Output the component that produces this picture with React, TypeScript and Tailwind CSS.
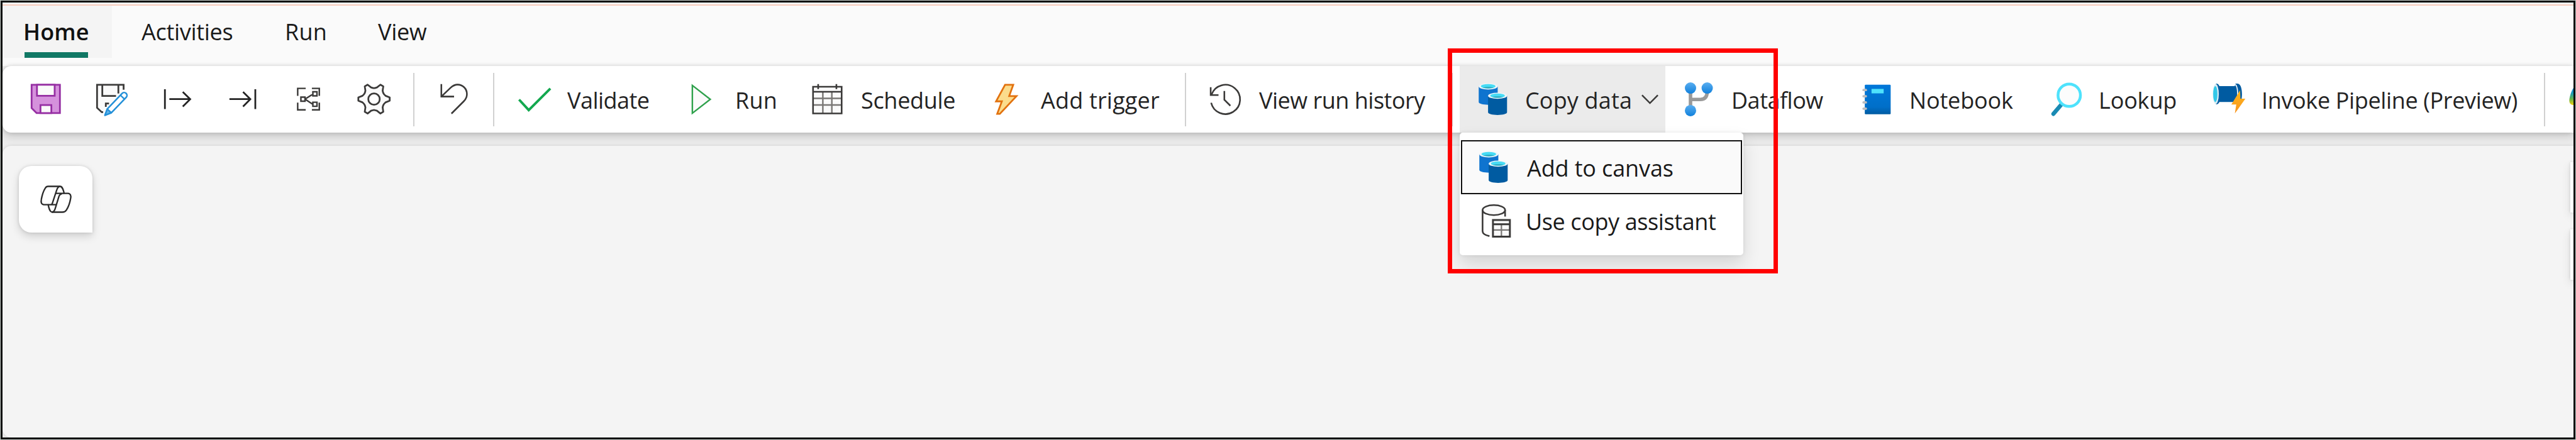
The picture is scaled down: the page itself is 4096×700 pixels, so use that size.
import type { ReactNode } from "react";

const INK = "#3b3a39";

function Icon({ children }: { children: ReactNode }) {
  return (
    <svg viewBox="0 0 56 56" className="h-[52px] w-[52px] shrink-0 overflow-visible" fill="none">
      {children}
    </svg>
  );
}

const SaveIcon = () => (
  <Icon>
    <path d="M3.5 3H52V51.5H12L3.5 43Z" fill="#d591dc" stroke="#962fa3" strokeWidth="3" />
    <path d="M12.7 3V22H43V3Z" fill="#fafafa" stroke="#962fa3" strokeWidth="3" />
    <path d="M18.7 51.5V37.8H37.3V51.5Z" fill="#fafafa" stroke="#962fa3" strokeWidth="3" />
  </Icon>
);

const SaveAsIcon = () => (
  <Icon>
    <path d="M2.5 3H48V18L18 46L12 50L2.5 42.5Z" fill="#fafafa" />
    <path
      d="M48 11.5V3H2.5V42.5L10.5 50H13M11.5 3V22.3H35M39 3V18M17.5 41V35.2H23"
      stroke={INK}
      strokeWidth="3"
    />
    <path
      d="M16 55.3L20 44.5L45.4 18A4.7 4.7 0 0 1 52.4 24.6L27 51Z"
      fill="#fff"
      stroke="#2390d8"
      strokeWidth="2.7"
      strokeLinejoin="round"
    />
    <path d="M16 55.3L20 44.5L27 51Z" fill="#5fb2ea" stroke="#2390d8" strokeWidth="2.4" strokeLinejoin="round" />
    <path d="M42.6 21L49.4 27.6" stroke="#2390d8" strokeWidth="2.6" />
  </Icon>
);

const InputIcon = () => (
  <Icon>
    <path d="M6.7 10.7V44.7M14.3 27.7H50M37.3 15.3L50 27.7L37.3 40.3" stroke="#242424" strokeWidth="3" />
  </Icon>
);

const OutputIcon = () => (
  <Icon>
    <path d="M49.5 10.7V44.7M5.2 27.7H41M28.5 15.3L41 27.7L28.5 40.3" stroke="#242424" strokeWidth="3" />
  </Icon>
);

const LineageIcon = () => (
  <Icon>
    <path
      d="M22.7 9.3H9V22M33.3 9.3H46V22M22.7 46H9V33.7M33.3 46H46V33.7"
      stroke={INK}
      strokeWidth="2.6"
    />
    <path
      d="M14.5 24.2H21.5V31.2H14.5ZM35 15H42V22H35ZM35 33H42V40H35ZM21.5 27.7L35 19M21.5 27.7L35 36.5"
      stroke={INK}
      strokeWidth="2.6"
    />
  </Icon>
);

function gearPoints() {
  const points: string[] = [];
  const add = (deg: number, r: number) => {
    const a = (deg * Math.PI) / 180;
    points.push(`${(27.7 + r * Math.cos(a)).toFixed(2)},${(27.6 + r * Math.sin(a)).toFixed(2)}`);
  };
  for (let k = 0; k < 6; k++) {
    const c = k * 60;
    add(c - 16, 20.5);
    add(c - 6, 27);
    add(c + 6, 27);
    add(c + 16, 20.5);
    add(c + 26, 19);
    add(c + 34, 19);
  }
  return points.join(" ");
}

const GearIcon = () => (
  <Icon>
    <polygon points={gearPoints()} fill="#fafafa" stroke={INK} strokeWidth="3" strokeLinejoin="round" />
    <circle cx="27.7" cy="27.6" r="9.8" fill="#fff" stroke={INK} strokeWidth="3" />
  </Icon>
);

const UndoIcon = () => (
  <Icon>
    <path
      d="M6.2 1.8V23.3H28M6.2 23.3L22 8.2C26 4.5 29.5 2.8 34 2.8A16 16 0 0 1 50 19C50 24 48 28 44.5 31.5L23.5 52.5"
      stroke={INK}
      strokeWidth="2.8"
    />
  </Icon>
);

const CheckIcon = () => (
  <Icon>
    <path d="M1.5 28.5L18 46.5L55 9.5" stroke="#13a84f" strokeWidth="4.2" />
  </Icon>
);

const PlayIcon = () => (
  <Icon>
    <path d="M12.8 4.2L43.5 28L12.8 51.8Z" fill="#fafafa" stroke="#2fa14c" strokeWidth="2.6" />
  </Icon>
);

const CalendarIcon = () => (
  <Icon>
    <path d="M3 6.5H52V52.3H3Z" fill="#fafafa" />
    <path d="M3 26.3H52M3 37.7H52M19.8 15V52M35.2 15V52" stroke="#797775" strokeWidth="2.6" />
    <path d="M3 6.5H52V52.3H3ZM3 15H52M11.8 1.8V10.4M43 1.8V10.4" stroke={INK} strokeWidth="2.8" />
  </Icon>
);

const BoltIcon = () => (
  <Icon>
    <path
      d="M26 3H40L33 22.5H45.5L17 53H12.5L20.5 31.5H10.5Z"
      fill="#fbdc8c"
      stroke="#e2720f"
      strokeWidth="3"
    />
  </Icon>
);

const HistoryIcon = () => (
  <Icon>
    <path
      d="M4.1 34A25.1 25.1 0 1 0 5 19.5M3.3 7.3V20.7H16.7M26.7 13.7V28.7L37 39"
      stroke={INK}
      strokeWidth="2.8"
    />
  </Icon>
);

const CopyDataIcon = () => (
  <Icon>
    <path d="M3.5 6V32.8C3.5 35.3 10.8 37.3 19.7 37.3S36 35.3 36 32.8V6Z" fill="#0f74cf" />
    <ellipse cx="19.7" cy="6" rx="16.2" ry="5.2" fill="#eef5f8" />
    <ellipse cx="19.7" cy="5.7" rx="12.6" ry="3.7" fill="#46dcf5" />
    <path d="M10.5 8.2C15 6.4 24.4 6.4 29 8.2C24.4 9.8 15 9.8 10.5 8.2Z" fill="#2ea9be" />
    <path d="M19.5 22V50.4C19.5 52.9 26.8 54.9 35.7 54.9S52 52.9 52 50.4V22Z" fill="#005ba1" />
    <ellipse cx="35.7" cy="22" rx="16.2" ry="5.2" fill="#eef5f8" />
    <ellipse cx="35.7" cy="21.8" rx="12.6" ry="3.7" fill="#46dcf5" />
    <path d="M26.5 24.2C31 22.4 40.4 22.4 45 24.2C40.4 25.8 31 25.8 26.5 24.2Z" fill="#2ea9be" />
  </Icon>
);

const DataflowIcon = () => (
  <Icon>
    <defs>
      <linearGradient id="node" x1="0" y1="0" x2="0" y2="1">
        <stop offset="0" stopColor="#5aaef0" />
        <stop offset="1" stopColor="#1080dc" />
      </linearGradient>
    </defs>
    <path d="M14 12V44M14 28.3H31Q42.6 28.3 42.6 14" stroke="#9a9a9a" strokeWidth="6" />
    <circle cx="14" cy="8.7" r="9.7" fill="url(#node)" />
    <circle cx="42.6" cy="8.7" r="9.7" fill="url(#node)" />
    <circle cx="14" cy="47.3" r="9.7" fill="url(#node)" />
  </Icon>
);

const NotebookIcon = () => (
  <Icon>
    <defs>
      <linearGradient id="book" x1="0" y1="0" x2="0" y2="1">
        <stop offset="0" stopColor="#0078d9" />
        <stop offset="0.75" stopColor="#006fc9" />
        <stop offset="1" stopColor="#005ba1" />
      </linearGradient>
    </defs>
    <rect x="7.7" y="3" width="44.3" height="50.7" rx="1.5" fill="url(#book)" />
    <rect x="19.2" y="10.2" width="20.8" height="7.6" fill="#4ee2fc" />
    {[12, 22.7, 33.3, 44].map((y) => (
      <rect key={y} x="3.6" y={y - 2} width="8" height="4" rx="2" fill="#b9bcc0" />
    ))}
  </Icon>
);

const LookupIcon = () => (
  <Icon>
    <path d="M20.5 36.5L6.5 53" stroke="#198ab3" strokeWidth="7" strokeLinecap="round" />
    <circle cx="33.6" cy="21" r="19.2" fill="#fcfcfc" stroke="#4ee2fc" strokeWidth="4.8" />
  </Icon>
);

const InvokeIcon = () => (
  <Icon>
    <defs>
      <linearGradient id="flash" x1="0" y1="0" x2="0" y2="1">
        <stop offset="0" stopColor="#fdb81c" />
        <stop offset="1" stopColor="#f9941e" />
      </linearGradient>
    </defs>
    <path
      d="M6 1.2C9.5 1.2 10.5 2.8 11.8 5.3H38L39.5 1.2H43C48 2 50.5 9 50.5 19S48 35.5 43 36.3H39.5L38 32.5H11.8C10.5 35 9.5 36.7 6 36.7Z"
      fill="#005ba1"
    />
    <path d="M39 2.5C44.5 7 44.5 31 39 35.5" stroke="#e6eff6" strokeWidth="2" />
    <ellipse cx="5.6" cy="19" rx="5.2" ry="17" fill="#d8ecf4" />
    <ellipse cx="4.8" cy="19" rx="3.6" ry="13.6" fill="#32c8e8" />
    <path d="M47.3 12.3L32.3 37H40.7L38.3 52.3L56.3 27H47.8Z" fill="url(#flash)" />
  </Icon>
);

const AssistantIcon = () => (
  <Icon>
    <ellipse cx="24" cy="10" rx="19.3" ry="8.6" stroke={INK} strokeWidth="2.8" fill="#fafafa" />
    <path d="M4.7 10V46C4.7 50 9 53 16.5 54.5M43.3 10V21" stroke={INK} strokeWidth="2.8" />
    <path d="M22.5 27H51.5V55.5H22.5Z" fill="#fafafa" />
    <path d="M22.5 44H51.5M37 35V55" stroke="#797775" strokeWidth="2.4" />
    <path d="M22.5 27H51.5V55.5H22.5ZM22.5 34.3H51.5" stroke={INK} strokeWidth="3.2" />
  </Icon>
);

const CopilotIcon = () => (
  <svg viewBox="200 227 174 154" className="h-[48px] w-[54px]" fill="none">
    <path
      d="M247 238H308C320 239 324 252 329 274H348C362 275 365 286 362 300C357 330 348 348 340 360C335 368 329 370 320 370H266C256 368 252 355 247 332H226C212 331 209 320 212 305C217 276 225 258 232 247C236 240 240 238 247 238Z"
      stroke="#2b2b2b"
      strokeWidth="7.5"
      strokeLinejoin="round"
    />
    <path
      d="M306 238C297 240 294 246 291 256L268 326C267 329 264 332 258 332M329 274H285M247 332H290M318 276C308 277 305 281 302 290L283 352C280 362 277 369 267 370"
      stroke="#2b2b2b"
      strokeWidth="7.5"
      strokeLinejoin="round"
    />
  </svg>
);

const Divider = () => <div className="h-[85px] w-[2px] shrink-0 bg-[#d1d1d1]" />;

function Label({ className, children }: { className: string; children: ReactNode }) {
  return <span className={`pt-[4px] whitespace-nowrap ${className}`}>{children}</span>;
}

function Item({ className, children }: { className: string; children: ReactNode }) {
  return <div className={`flex h-full shrink-0 items-center ${className}`}>{children}</div>;
}

function Menu() {
  return (
    <div className="absolute top-[106px] left-0 z-10 h-[195px] w-[451px] rounded-[5px] bg-white px-[2px] pt-[12px] shadow-[0_0_6px_rgba(0,0,0,0.08),0_14px_28px_rgba(0,0,0,0.13)]">
      <div className="flex h-[86px] items-center gap-[27px] border-2 border-[#111] bg-[#fafafa] pl-[24px] text-[#1a1a1a]">
        <CopyDataIcon />
        <Label className="tracking-[-0.13px]">Add to canvas</Label>
      </div>
      <div className="flex h-[83px] items-center gap-[21px] pl-[30px] text-[#1a1a1a]">
        <AssistantIcon />
        <Label className="tracking-[-0.4px]">Use copy assistant</Label>
      </div>
    </div>
  );
}

function Toolbar() {
  return (
    <div className="relative z-10 h-[106px] shrink-0">
      <div className="flex h-full items-center rounded-l-[14px] bg-white pl-[43px] shadow-[0_0_6px_rgba(0,0,0,0.14),0_6px_14px_rgba(0,0,0,0.16)]">
        <Item className="w-[105px]"><SaveIcon /></Item>
        <Item className="w-[104px]"><SaveAsIcon /></Item>
        <Item className="w-[104px]"><InputIcon /></Item>
        <Item className="w-[105px]"><OutputIcon /></Item>
        <Item className="w-[104px]"><LineageIcon /></Item>
        <Item className="w-[88px]"><GearIcon /></Item>
        <Divider />
        <Item className="w-[125px] pl-[37px]"><UndoIcon /></Item>
        <Divider />
        <Item className="ml-[38px] w-[265px] gap-[26px]">
          <CheckIcon />
          <Label className="tracking-[-0.54px]">Validate</Label>
        </Item>
        <Item className="w-[201px] gap-[28px]">
          <PlayIcon />
          <Label className="tracking-[0.25px]">Run</Label>
        </Item>
        <Item className="w-[284px] gap-[27px]">
          <CalendarIcon />
          <Label className="tracking-[-0.31px]">Schedule</Label>
        </Item>
        <Item className="w-[310px] gap-[29px]">
          <BoltIcon />
          <Label className="tracking-[0.19px]">Add trigger</Label>
        </Item>
        <Divider />
        <Item className="ml-[36px] w-[386px] gap-[28px]">
          <HistoryIcon />
          <Label className="tracking-[-0.5px]">View run history</Label>
        </Item>
        <Divider />
        <div className="relative ml-[11px] flex h-full w-[327px] shrink-0 items-center bg-[#ebebeb] pr-[11px] pl-[27px]">
          <CopyDataIcon />
          <Label className="ml-[25px] tracking-[0.16px]">Copy data</Label>
          <svg viewBox="0 0 29 17" className="mb-[1px] ml-auto h-[16px] w-[27px] shrink-0" fill="none">
            <path d="M1 1.5L14.5 15L28 1.5" stroke={INK} strokeWidth="2.7" />
          </svg>
          <Menu />
        </div>
        <Item className="ml-[27px] w-[283px] gap-[26px]">
          <DataflowIcon />
          <Label className="tracking-[-0.5px]">Dataflow</Label>
        </Item>
        <Item className="w-[301px] gap-[26px]">
          <NotebookIcon />
          <Label className="tracking-[-0.16px]">Notebook</Label>
        </Item>
        <Item className="w-[259px] gap-[26px]">
          <LookupIcon />
          <Label className="tracking-[-0.16px]">Lookup</Label>
        </Item>
        <Item className="w-[527px] gap-[26px]">
          <InvokeIcon />
          <Label className="tracking-[-0.36px]">Invoke Pipeline (Preview)</Label>
        </Item>
        <Divider />
        <svg viewBox="0 0 7 27" className="mb-[9px] ml-[38px] h-[27px] w-[7px] shrink-0">
          <defs>
            <linearGradient id="edge" x1="0" y1="0" x2="0" y2="1">
              <stop offset="0" stopColor="#1683d8" />
              <stop offset="0.3" stopColor="#1a9bb8" />
              <stop offset="0.65" stopColor="#67b54b" />
              <stop offset="1" stopColor="#f2cf0a" />
            </linearGradient>
          </defs>
          <path d="M7 0C4.5 3 2 10 .8 16C-.5 22 1 27 7 27Z" fill="url(#edge)" />
        </svg>
      </div>
    </div>
  );
}

export default function App() {
  return (
    <div className="h-[700px] w-[4096px] overflow-hidden border border-[#c9cfcc] font-['Open_Sans','Noto_Sans',sans-serif] text-[36px] leading-[48px] text-[#242424]">
      <div className="relative flex h-full flex-col overflow-hidden border-[3px] border-[#080c0a] bg-[#ececec]">
        <div className="h-[101px] shrink-0 bg-[#fafafa]">
          <div className="h-[3px] bg-[#f4f8f7]" />
          <div className="h-[2px] bg-[#f9cdbd]" />
          <nav className="flex h-[83px] text-[#1a1a1a]">
            <div className="flex w-[174px] flex-col bg-[#f4f4f4] pt-[18px] pl-[33px] font-semibold text-[#111]">
              <span className="tracking-[0.15px]">Home</span>
              <span className="mt-[8px] ml-[2px] h-[9px] w-[101px] bg-[#117865]" />
            </div>
            <span className="w-[275px] pt-[18px] pl-[47px] tracking-[-0.3px]">Activities</span>
            <span className="w-[148px] pt-[18px] tracking-[0.25px]">Run</span>
            <span className="pt-[18px] tracking-[-0.33px]">View</span>
          </nav>
        </div>
        <Toolbar />
        <main className="mt-[21px] flex grow items-start justify-between rounded-l-[14px] bg-[#f4f4f4] shadow-[0_0_5px_rgba(0,0,0,0.13)]">
          <button className="mt-[32px] ml-[26px] flex h-[106px] w-[117px] items-center justify-center rounded-[20px] rounded-br-none bg-white shadow-[0_0_5px_rgba(0,0,0,0.13),0_6px_14px_rgba(0,0,0,0.15)]">
            <CopilotIcon />
          </button>
          <div className="mt-[26px] flex flex-col gap-[27px]">
            <div className="h-[80px] w-[5px] bg-white shadow-[0_0_5px_rgba(0,0,0,0.13),0_6px_14px_rgba(0,0,0,0.15)]" />
            <div className="h-[80px] w-[5px] bg-white shadow-[0_0_5px_rgba(0,0,0,0.13),0_6px_14px_rgba(0,0,0,0.15)]" />
          </div>
        </main>
        <div className="absolute top-[73px] left-[2298px] z-20 h-[358px] w-[525px] border-[7px] border-[#ff0000]" />
      </div>
    </div>
  );
}
